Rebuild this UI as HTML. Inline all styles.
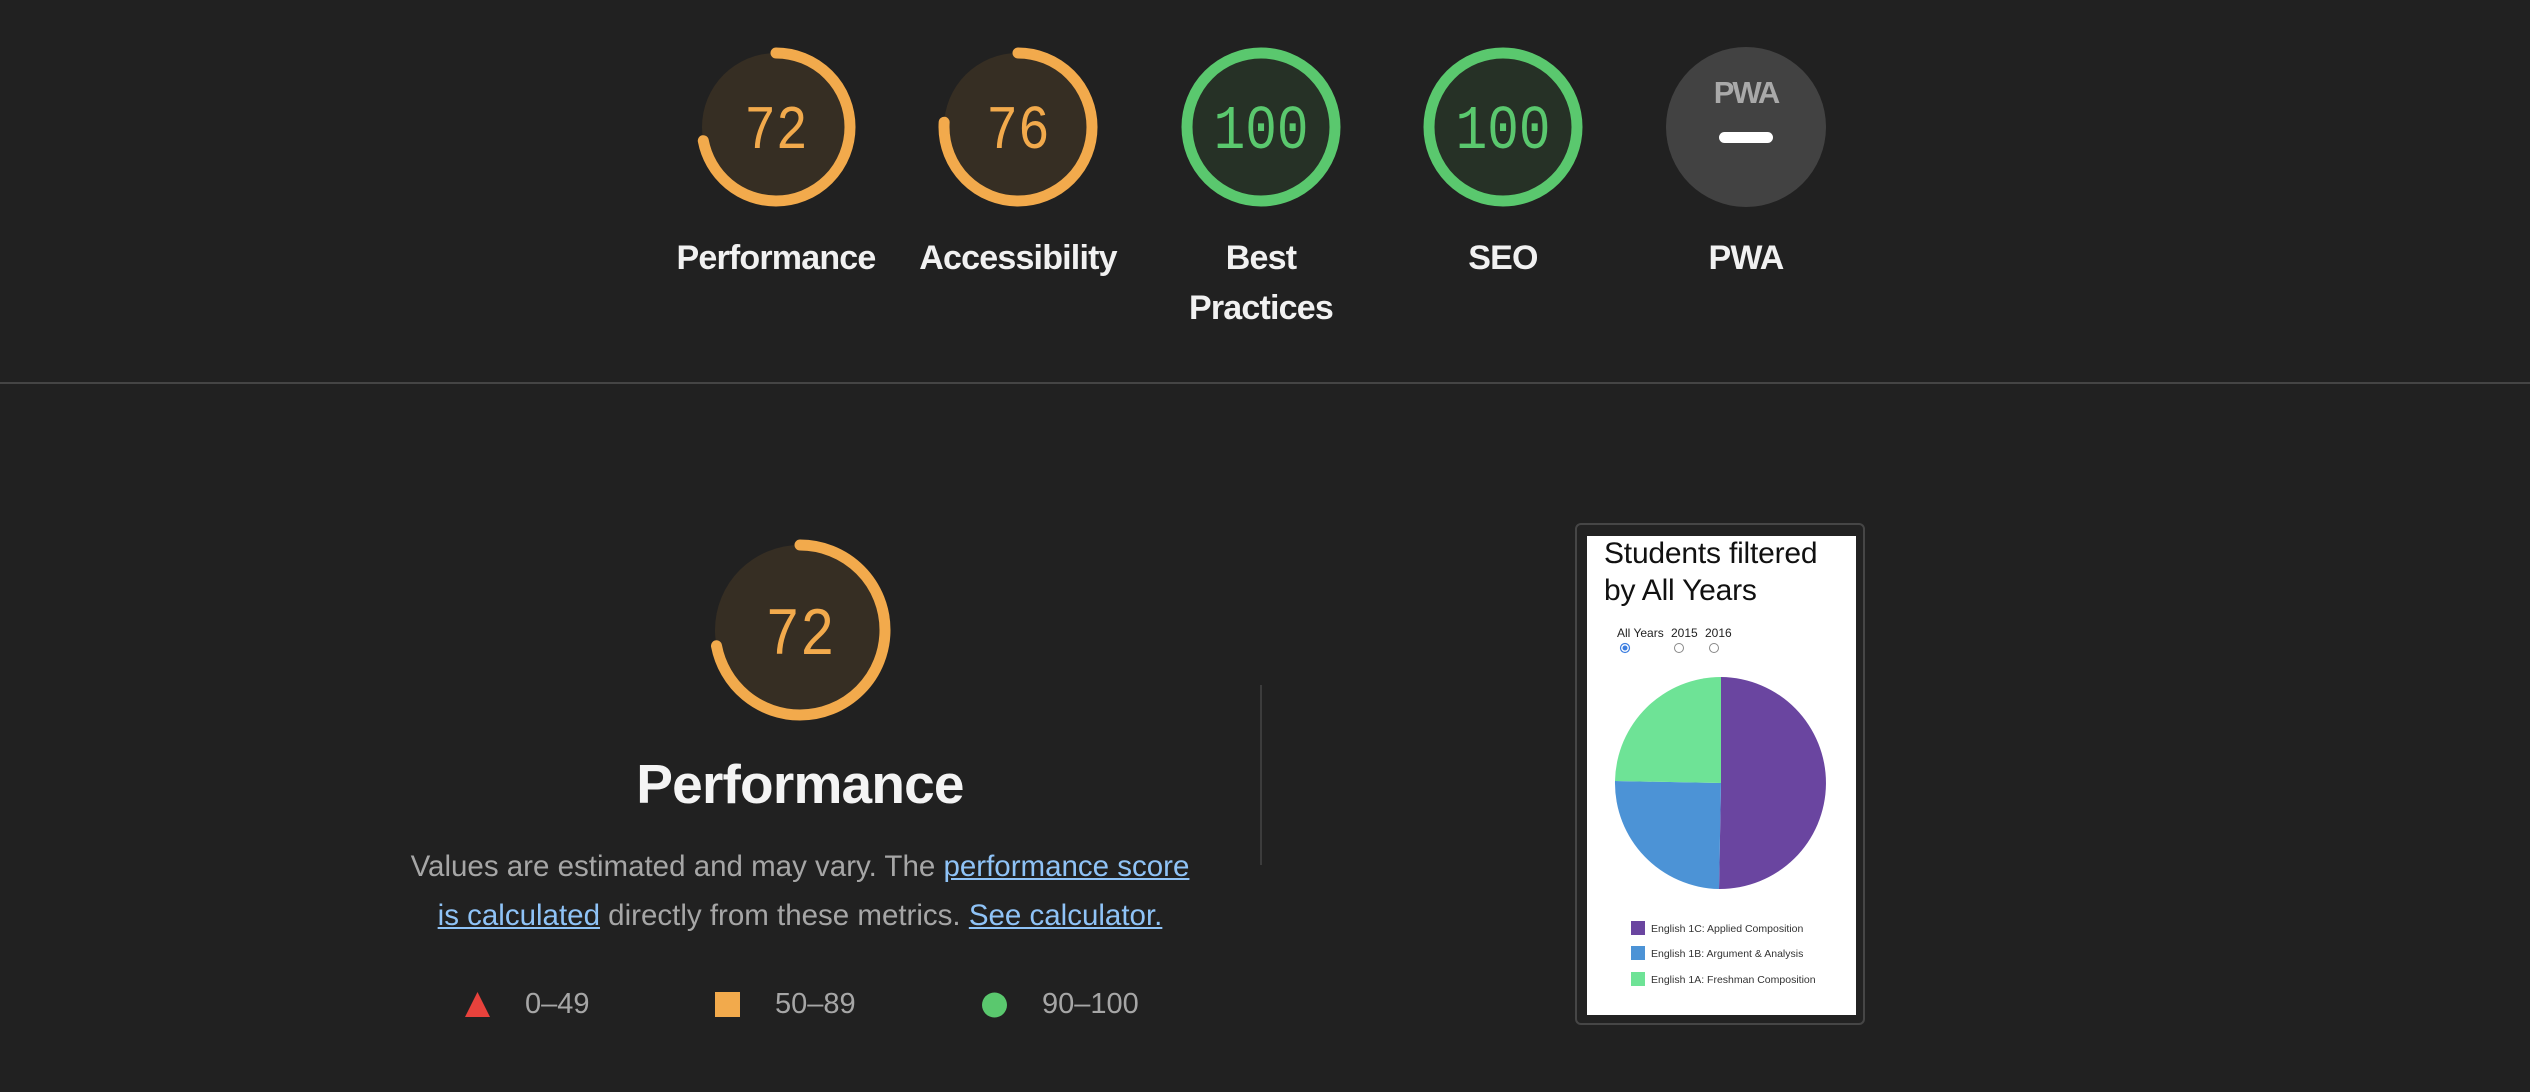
<!DOCTYPE html>
<html><head><meta charset="utf-8"><style>
html,body{margin:0;padding:0;background:#212121;width:2530px;height:1092px;overflow:hidden;font-family:"Liberation Sans",Arial,sans-serif;}
.abs{position:absolute;}
.lbl{position:absolute;width:240px;text-align:center;color:#f1f1f1;font-size:34px;font-weight:600;line-height:50px;letter-spacing:-0.8px;}
.desc{color:#a6a6a6;font-size:29.5px;}
.desc a{color:#8fc3f7;text-decoration:underline;}
</style></head><body>

<svg class="abs" style="left:0;top:0" width="2530" height="400">
 <g transform="translate(776,127)">
  <circle r="74" fill="#362e23"/>
  <circle r="74" fill="none" stroke="#f2aa4c" stroke-width="11" stroke-linecap="round" stroke-dasharray="334.8 465" transform="rotate(-90)"/>
 </g>
 <g transform="translate(1018,127)">
  <circle r="74" fill="#362e23"/>
  <circle r="74" fill="none" stroke="#f2aa4c" stroke-width="11" stroke-linecap="round" stroke-dasharray="353.4 465" transform="rotate(-90)"/>
 </g>
 <g transform="translate(1261,127)">
  <circle r="74" fill="#263126"/>
  <circle r="74" fill="none" stroke="#5ac86e" stroke-width="11"/>
 </g>
 <g transform="translate(1503,127)">
  <circle r="74" fill="#263126"/>
  <circle r="74" fill="none" stroke="#5ac86e" stroke-width="11"/>
 </g>
 <circle cx="1746" cy="127" r="80" fill="#424242"/>
 <rect x="1719" y="132" width="54" height="11" rx="5.5" fill="#fff"/>
 <text x="1746" y="103" text-anchor="middle" font-family="Liberation Sans" font-weight="bold" font-size="31" fill="#a9a9a9" letter-spacing="-2">PWA</text>
 <g font-family="Liberation Mono,DejaVu Sans Mono,monospace" font-size="62" text-anchor="middle">
  <text transform="translate(776,148) scale(0.85,1)" fill="#f2aa4c">72</text>
  <text transform="translate(1018,148) scale(0.85,1)" fill="#f2aa4c">76</text>
  <text transform="translate(1261,148) scale(0.85,1)" fill="#5ac86e">100</text>
  <text transform="translate(1503,148) scale(0.85,1)" fill="#5ac86e">100</text>
 </g>
</svg>

<div class="lbl" style="left:656px;top:233px">Performance</div>
<div class="lbl" style="left:898px;top:233px">Accessibility</div>
<div class="lbl" style="left:1141px;top:233px">Best<br>Practices</div>
<div class="lbl" style="left:1383px;top:233px">SEO</div>
<div class="lbl" style="left:1626px;top:233px">PWA</div>

<div class="abs" style="left:0;top:382px;width:2530px;height:2px;background:#454545"></div>

<svg class="abs" style="left:700px;top:530px" width="200" height="200">
 <g transform="translate(100,100)">
  <circle r="85" fill="#362e23"/>
  <circle r="85" fill="none" stroke="#f2aa4c" stroke-width="11" stroke-linecap="round" stroke-dasharray="384.5 534" transform="rotate(-90)"/>
  <text transform="translate(0,24) scale(0.85,1)" text-anchor="middle" font-family="Liberation Mono,DejaVu Sans Mono,monospace" font-size="68" fill="#f2aa4c">72</text>
 </g>
</svg>

<div class="abs" style="left:500px;top:752px;width:600px;text-align:center;color:#f4f4f4;font-size:55px;font-weight:600;letter-spacing:-0.8px">Performance</div>

<div class="abs desc" style="left:360px;top:842px;width:880px;text-align:center;line-height:49px">Values are estimated and may vary. The <a>performance score<br>is calculated</a> directly from these metrics. <a>See calculator.</a></div>

<svg class="abs" style="left:440px;top:980px" width="600" height="50">
 <polygon points="37.5,12 50,37 25,37" fill="#e8423c"/>
 <rect x="275" y="12" width="25" height="25" fill="#f2aa4c"/>
 <circle cx="554.5" cy="25" r="12.5" fill="#5ac86e"/>
</svg>
<div class="abs desc" style="left:525px;top:988px;font-size:29px">0–49</div>
<div class="abs desc" style="left:775px;top:988px;font-size:29px">50–89</div>
<div class="abs desc" style="left:1042px;top:988px;font-size:29px">90–100</div>

<div class="abs" style="left:1260px;top:685px;width:2px;height:180px;background:#3c3c3c"></div>

<div class="abs" style="left:1575px;top:523px;width:290px;height:502px;border:2px solid #464646;border-radius:6px;background:#222;box-sizing:border-box"></div>
<div class="abs" style="left:1587px;top:536px;width:269px;height:479px;background:#fff"></div>
<div class="abs" style="left:1604px;top:535px;font-size:30px;line-height:37px;color:#111;letter-spacing:-0.2px">Students filtered<br>by All Years</div>
<div class="abs" style="left:1617px;top:626px;font-size:12px;color:#222">All Years</div>
<div class="abs" style="left:1671px;top:626px;font-size:12px;color:#222">2015</div>
<div class="abs" style="left:1705px;top:626px;font-size:12px;color:#222">2016</div>
<svg class="abs" style="left:1587px;top:536px" width="269" height="479">
 <circle cx="38" cy="112" r="4.5" fill="#fff" stroke="#3c7ee0" stroke-width="1.2"/>
 <circle cx="38" cy="112" r="2.5" fill="#3c7ee0"/>
 <circle cx="92" cy="112" r="4.5" fill="#fff" stroke="#888" stroke-width="1"/>
 <circle cx="127" cy="112" r="4.5" fill="#fff" stroke="#888" stroke-width="1"/>
 <g transform="translate(134,247)">
  <path d="M0,-106 A106,106 0 0 1 -2,106 L0,0Z" fill="#6a45a0"/>
  <path d="M-2,106 A106,106 0 0 1 -106,-2 L0,0Z" fill="#4c93d6"/>
  <path d="M-106,-2 A106,106 0 0 1 0,-106 L0,0Z" fill="#6ee396"/>
 </g>
 <rect x="44" y="385" width="14" height="14" fill="#6a45a0"/>
 <rect x="44" y="410" width="14" height="14" fill="#4c93d6"/>
 <rect x="44" y="436" width="14" height="14" fill="#6ee396"/>
 <g font-family="Liberation Sans" font-size="10.5" fill="#333">
  <text x="64" y="396">English 1C: Applied Composition</text>
  <text x="64" y="421">English 1B: Argument &amp; Analysis</text>
  <text x="64" y="447">English 1A: Freshman Composition</text>
 </g>
</svg>
</body></html>
